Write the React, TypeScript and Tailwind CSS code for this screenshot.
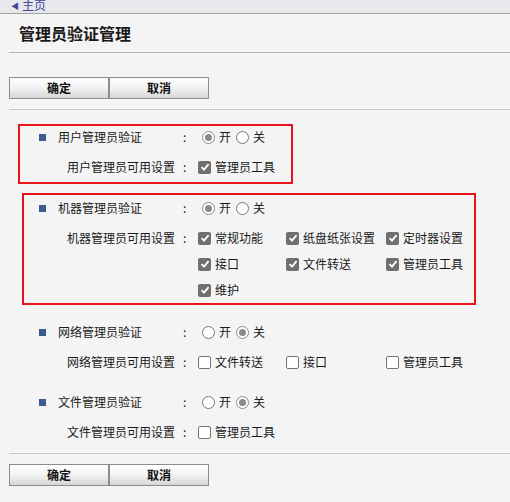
import React from "react";

type Item = { label: string; on: boolean };

const SECTIONS: {
  auth: string;
  avail: string;
  on: boolean;
  items: Item[];
}[] = [
  {
    auth: "用户管理员验证",
    avail: "用户管理员可用设置",
    on: true,
    items: [{ label: "管理员工具", on: true }],
  },
  {
    auth: "机器管理员验证",
    avail: "机器管理员可用设置",
    on: true,
    items: [
      { label: "常规功能", on: true },
      { label: "纸盘纸张设置", on: true },
      { label: "定时器设置", on: true },
      { label: "接口", on: true },
      { label: "文件转送", on: true },
      { label: "管理员工具", on: true },
      { label: "维护", on: true },
    ],
  },
  {
    auth: "网络管理员验证",
    avail: "网络管理员可用设置",
    on: false,
    items: [
      { label: "文件转送", on: false },
      { label: "接口", on: false },
      { label: "管理员工具", on: false },
    ],
  },
  {
    auth: "文件管理员验证",
    avail: "文件管理员可用设置",
    on: false,
    items: [{ label: "管理员工具", on: false }],
  },
];

const Radio = ({ checked }: { checked: boolean }) => (
  <span
    className={`w-[13px] h-[13px] rounded-full border bg-white flex items-center justify-center shrink-0 ${
      checked ? "border-[#8a8a8a]" : "border-[#767676]"
    }`}
  >
    {checked && <span className="w-[7px] h-[7px] rounded-full bg-[#8a8a8a]" />}
  </span>
);

const Check = ({ checked }: { checked: boolean }) =>
  checked ? (
    <span className="w-[13px] h-[13px] rounded-[2px] bg-[#6f6f6f] flex items-center justify-center shrink-0">
      <svg width="10" height="10" viewBox="0 0 10 10">
        <path d="M1.5 5.2 L4 7.6 L8.6 2.2" fill="none" stroke="white" strokeWidth="1.8" />
      </svg>
    </span>
  ) : (
    <span className="w-[13px] h-[13px] rounded-[2px] border border-[#767676] bg-white shrink-0" />
  );

const Buttons = () => (
  <div className="flex ml-[9px]">
    {["确定", "取消"].map((t) => (
      <button
        key={t}
        className="w-[100px] h-[22px] border border-[#8c8c8c] bg-gradient-to-b from-white via-[#f2f2f2] to-[#d6d6d6] text-[12px] font-bold text-[#111] leading-none"
      >
        {t}
      </button>
    ))}
  </div>
);

const Section = ({ s }: { s: (typeof SECTIONS)[number] }) => (
  <div className="whitespace-nowrap">
    <div className="flex items-center h-[22px]">
      <div className="w-[136px] shrink-0 flex items-center">
        <span className="w-[7px] h-[7px] bg-[#3c5a8c] shrink-0" />
        <span className="ml-[12px]">{s.auth}</span>
      </div>
      <span className="w-[23px] shrink-0 pl-[8px]">:</span>
      <div className="flex items-center shrink-0">
        <span className="ml-[4px]"><Radio checked={s.on} /></span>
        <span className="ml-[4px]">开</span>
        <span className="ml-[5px]"><Radio checked={!s.on} /></span>
        <span className="ml-[4px]">关</span>
      </div>
    </div>
    <div className="flex mt-[6px]">
      <div className="w-[136px] shrink-0 h-[26px] flex items-center justify-end">{s.avail}</div>
      <span className="w-[23px] shrink-0 pl-[8px] h-[26px] flex items-center">:</span>
      <div className="grid grid-cols-[88px_100px_90px] auto-rows-[26px] shrink-0">
        {s.items.map((it, i) => (
          <div key={i} className="flex items-center gap-[4px]">
            <Check checked={it.on} />
            <span>{it.label}</span>
          </div>
        ))}
      </div>
    </div>
  </div>
);

export default function App() {
  return (
    <div
      className="w-[510px] h-[502px] bg-[#f4f4f4] text-[12px] text-[#1a1a1a] overflow-hidden"
      style={{ fontFamily: '"Noto Sans CJK SC", "Noto Sans", sans-serif' }}
    >
      <div className="h-[14px] bg-[#e7e8ec] border-b border-[#a3a3a3] flex items-start overflow-hidden">
        <span className="ml-[11px] mt-[1px] text-[8px] leading-[10px] text-[#44449a]">◀</span>
        <span className="ml-[3px] -mt-[2px] text-[12px] leading-[14px] text-[#44449a]">主页</span>
      </div>
      <div className="h-[38px] flex items-center pl-[19px] text-[16px] font-bold">管理员验证管理</div>
      <div className="ml-[9px] border-t border-[#b4b4b4]" />

      <div className="mt-[24px]">
        <Buttons />
      </div>
      <div className="ml-[9px] mt-[10px] border-t border-[#c8c8c8]" />

      <div className="mt-[14px] ml-[18px] w-[275px] border-2 border-[#e8141a] pl-[19px] pb-[2px] overflow-hidden">
        <Section s={SECTIONS[0]} />
      </div>
      <div className="mt-[9px] ml-[22px] w-[454px] border-2 border-[#e8141a] pl-[15px] pt-[2px]">
        <Section s={SECTIONS[1]} />
      </div>
      <div className="mt-[16px] ml-[39px]">
        <Section s={SECTIONS[2]} />
      </div>
      <div className="mt-[16px] ml-[39px]">
        <Section s={SECTIONS[3]} />
      </div>

      <div className="ml-[9px] mt-[8px] border-t border-[#c8c8c8]" />
      <div className="mt-[10px]">
        <Buttons />
      </div>
    </div>
  );
}
